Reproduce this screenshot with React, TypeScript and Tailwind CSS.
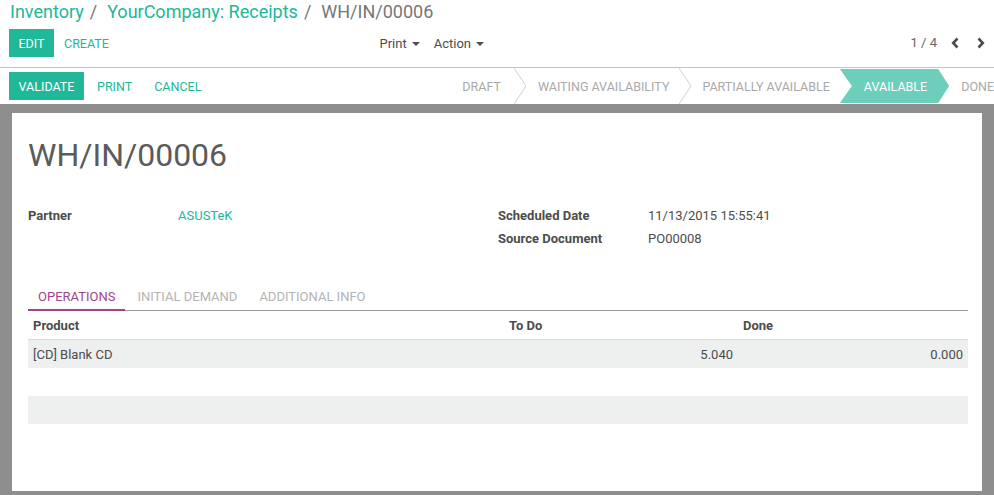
import React from 'react';

function Caret() {
  return <span className="ml-[5px] inline-block w-0 h-0 border-x-[4px] border-x-transparent border-t-[4px] border-t-[#4c4c4c]" />;
}

function Sep() {
  return (
    <svg width="12" height="36" viewBox="0 0 12 36" className="shrink-0">
      <polyline points="0,0 12,18 0,36" fill="none" stroke="#cfcfcf" strokeWidth="1" />
    </svg>
  );
}

function Chevron({ dir }: { dir: 'left' | 'right' }) {
  return (
    <svg width="9" height="12" viewBox="0 0 9 12" className="shrink-0">
      <polyline
        points={dir === 'left' ? '6.5,1.5 2.2,6 6.5,10.5' : '2.5,1.5 6.8,6 2.5,10.5'}
        fill="none"
        stroke="#4c4c4c"
        strokeWidth="2.6"
      />
    </svg>
  );
}

function StatusBar() {
  return (
    <div className="ml-auto -mr-[21px] flex h-[36px] shrink-0 items-center text-[12.5px] uppercase text-[#a9a9a9]">
      <span className="pl-[11px] pr-[13px] pt-[2px]">Draft</span>
      <Sep />
      <span className="pl-[12px] pr-[10px] pt-[2px]">Waiting Availability</span>
      <Sep />
      <span className="pl-[11px] pr-[10px] pt-[2px]">Partially Available</span>
      <div className="flex h-[34px] items-center bg-[#6dcebb] pl-[24px] pr-[22px] pt-[2px] text-white [clip-path:polygon(0_0,calc(100%-11px)_0,100%_50%,calc(100%-11px)_100%,0_100%,12px_50%)]">
        Available
      </div>
      <span className="pl-[12px] pr-[12px] pt-[2px]">Done</span>
    </div>
  );
}

function Field({ label, value, link }: { label: string; value: string; link?: boolean }) {
  return (
    <div className="flex h-[23px] items-center">
      <div className="w-[150px] font-bold text-[#4c4c4c]">{label}</div>
      <div className={link ? 'text-[#21b799]' : 'text-[#4c4c4c]'}>{value}</div>
    </div>
  );
}

export default function App() {
  const tabs = ['Operations', 'Initial Demand', 'Additional Info'];
  return (
    <div className="flex h-[495px] w-[994px] flex-col overflow-hidden bg-white font-['Roboto',sans-serif] text-[13px] text-[#4c4c4c]">
      {/* control panel */}
      <div className="border-b border-[#c4c4c4] px-[9px] pb-[10px]">
        <div className="flex h-[23px] items-center text-[18px]">
          <span className="pl-[1px] text-[#21b799]">Inventory</span>
          <span className="px-[6px] text-[#777]">/</span>
          <span className="pl-[4px] text-[#21b799]">YourCompany: Receipts</span>
          <span className="px-[6px] text-[#777]">/</span>
          <span className="pl-[4px] text-[#777]">WH/IN/00006</span>
        </div>
        <div className="mt-[6px] grid h-[28px] grid-cols-2">
          <div className="flex items-center">
            <button className="flex h-[28px] w-[45px] items-center justify-center bg-[#21b799] pt-[2px] text-[12.5px] uppercase text-white">Edit</button>
            <button className="ml-[1px] h-[28px] px-[9px] pt-[2px] text-[12.5px] uppercase text-[#21b799]">Create</button>
            <div className="ml-auto flex items-center pr-[13px] pt-[2px]">
              <span className="flex items-center">Print<Caret /></span>
              <span className="ml-[14px] flex items-center">Action<Caret /></span>
            </div>
          </div>
          <div className="flex items-center justify-end">
            <span className="text-[#666]">1 / 4</span>
            <span className="ml-[14px]"><Chevron dir="left" /></span>
            <span className="ml-[16px]"><Chevron dir="right" /></span>
          </div>
        </div>
      </div>

      {/* status bar */}
      <div className="flex h-[36px] items-center px-[9px]">
        <button className="flex h-[28px] w-[75px] items-center justify-center bg-[#21b799] pt-[2px] text-[12.5px] uppercase text-white">Validate</button>
        <button className="ml-[3px] h-[28px] px-[10px] pt-[2px] text-[12.5px] uppercase text-[#21b799]">Print</button>
        <button className="ml-[2px] h-[28px] px-[10px] pt-[2px] text-[12.5px] uppercase text-[#21b799]">Cancel</button>
        <StatusBar />
      </div>

      {/* sheet area */}
      <div className="flex-1 bg-[#8e8e8e] px-[12px] pt-[9px]">
        <div className="h-[378px] bg-white pl-[16px] pr-[14px] pt-[24px]">
          <h1 className="h-[36px] text-[32px] leading-[36px] text-[#5b5b5b]">WH/IN/00006</h1>

          <div className="mt-[31px] grid grid-cols-2">
            <div>
              <Field label="Partner" value="ASUSTeK" link />
            </div>
            <div>
              <Field label="Scheduled Date" value="11/13/2015 15:55:41" />
              <Field label="Source Document" value="PO00008" />
            </div>
          </div>

          <div className="mt-[32px] flex h-[29px] border-b border-[#9b9b9b]">
            {tabs.map((t, i) => (
              <div
                key={t}
                className={
                  'mr-[2px] -mb-px flex h-[29px] items-center border-b-2 px-[10px] pt-[2px] uppercase ' +
                  (i === 0 ? 'border-[#a0458a] text-[#a0458a]' : 'border-transparent text-[#b3b3b3]')
                }
              >
                {t}
              </div>
            ))}
          </div>

          <div>
            <div className="grid h-[29px] grid-cols-[476px_234px_1fr] items-center border-b border-[#d9d9d9] pt-[2px] font-bold">
              <div className="pl-[5px]">Product</div>
              <div className="pl-[5px]">To Do</div>
              <div className="pl-[5px]">Done</div>
            </div>
            <div className="grid h-[28px] grid-cols-[476px_234px_1fr] items-center bg-[#eeefef] pt-[2px]">
              <div className="pl-[5px]">[CD] Blank CD</div>
              <div className="pr-[5px] text-right">5.040</div>
              <div className="pr-[5px] text-right">0.000</div>
            </div>
            <div className="h-[28px]" />
            <div className="h-[28px] bg-[#eeefef]" />
          </div>
        </div>
      </div>
    </div>
  );
}
